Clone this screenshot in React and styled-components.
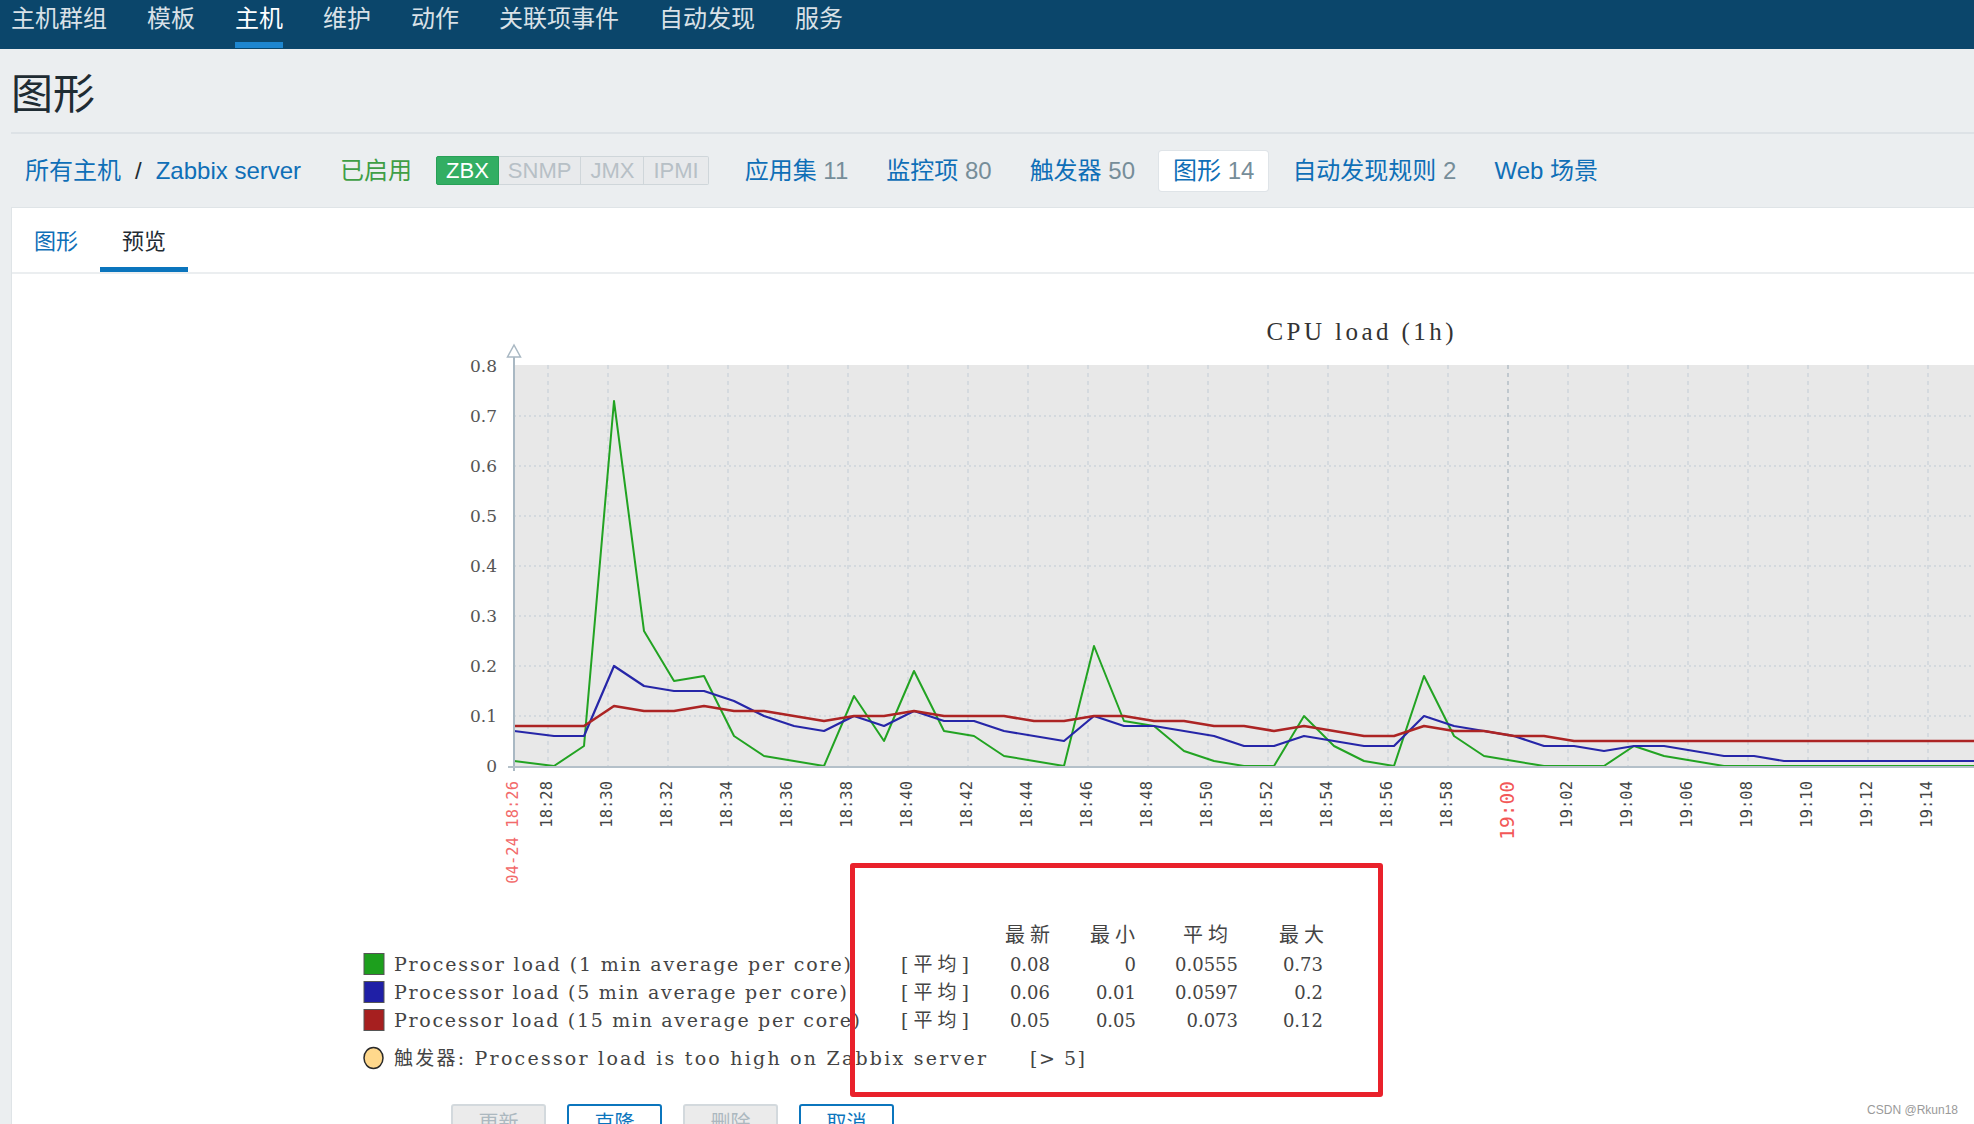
import React from "react";
import styled, { createGlobalStyle } from "styled-components";

const GlobalStyle = createGlobalStyle`
  html, body {
    margin: 0;
    padding: 0;
    background: #ebeef0;
    overflow-x: hidden;
  }
  body {
    font-family: "Liberation Sans", "Noto Sans CJK SC", sans-serif;
    color: #1f2c33;
  }
`;

//Styles
const Page = styled.div`
  position: relative;
  width: 100%;
  min-height: 1124px;
`;

const TopBar = styled.nav`
  height: 49px;
  background: #0b466b;
  display: flex;
  gap: 40px;
  padding-left: 11px;
  box-sizing: border-box;
`;

const TopItem = styled.a`
  height: 48px;
  box-sizing: border-box;
  padding-top: 4px;
  line-height: 30px;
  font-size: 24px;
  color: ${({ $active }) => ($active ? "#ffffff" : "#d9e1e7")};
  border-bottom: 6px solid ${({ $active }) => ($active ? "#1d86d0" : "transparent")};
  cursor: pointer;
`;

const TitleBlock = styled.div`
  margin-left: 11px;
  padding: 21px 0 12px 0;
  border-bottom: 2px solid #dde2e6;
`;

const Title = styled.h1`
  margin: 0;
  font-size: 42px;
  line-height: 50px;
  font-weight: normal;
  color: #1f2c33;
`;

const HostNav = styled.div`
  height: 73px;
  display: flex;
  align-items: center;
  padding-left: 11px;
  font-size: 24px;
  line-height: 30px;
`;

const Crumbs = styled.div`
  display: flex;
  align-items: center;
  padding-left: 14px;
`;

const Link = styled.a`
  color: #0f6fb7;
  cursor: pointer;
`;

const Slash = styled.span`
  margin: 0 14px;
  color: #1f2c33;
`;

const Status = styled.span`
  margin-left: 39px;
  color: #3f9e46;
`;

const Badges = styled.div`
  display: flex;
  margin-left: 24px;
`;

const Badge = styled.span`
  font-size: 22px;
  line-height: 27px;
  padding: 0 9px;
  border: 1px solid ${({ $on }) => ($on ? "#28a057" : "#cfd6da")};
  border-left-width: ${({ $first }) => ($first ? "1px" : "0")};
  background: ${({ $on }) => ($on ? "#33ae63" : "#e8eaec")};
  color: ${({ $on }) => ($on ? "#ffffff" : "#b7c0c6")};
  border-radius: ${({ $first, $last }) =>
    $first ? "2px 0 0 2px" : $last ? "0 2px 2px 0" : "0"};
`;

const HostTabs = styled.div`
  display: flex;
  gap: 10px;
  margin-left: 22px;
`;

const HostTab = styled.a`
  padding: 5px 14px;
  border-radius: 3px;
  background: ${({ $selected }) => ($selected ? "#ffffff" : "transparent")};
  box-shadow: ${({ $selected }) => ($selected ? "0 0 0 1px #dfe4e8" : "none")};
  color: #0f6fb7;
  cursor: pointer;
`;

const Count = styled.span`
  color: #768d99;
`;

const Panel = styled.div`
  margin-left: 11px;
  background: #ffffff;
  border-top: 1px solid #dfe4e7;
  border-left: 1px solid #dfe4e7;
`;

const TabBar = styled.div`
  display: flex;
  border-bottom: 2px solid #ebeef0;
`;

const Tab = styled.a`
  height: 64px;
  box-sizing: border-box;
  padding: 3px 22px 0;
  display: flex;
  align-items: center;
  font-size: 22px;
  color: ${({ $active }) => ($active ? "#1f2c33" : "#0f6fb7")};
  border-bottom: 5px solid ${({ $active }) => ($active ? "#0b75bd" : "transparent")};
  cursor: pointer;
`;

const GraphWrap = styled.div`
  display: block;
`;

const ButtonRow = styled.div`
  display: flex;
  gap: 21px;
  padding-left: 439px;
  padding-bottom: 20px;
`;

const Button = styled.button`
  width: 95px;
  height: 34px;
  border-radius: 3px;
  font-family: inherit;
  font-size: 20px;
  border: ${({ $disabled }) => ($disabled ? "2px solid #d3d9dd" : "2px solid #0b75bd")};
  background: ${({ $disabled }) => ($disabled ? "#ebebeb" : "#ffffff")};
  color: ${({ $disabled }) => ($disabled ? "#acb8bf" : "#0b75bd")};
`;

const Annotation = styled.div`
  position: absolute;
  left: 850px;
  top: 863px;
  width: 533px;
  height: 234px;
  box-sizing: border-box;
  border: 5px solid #e9212b;
  border-radius: 3px;
  pointer-events: none;
`;

const Watermark = styled.div`
  position: absolute;
  right: 16px;
  top: 1103px;
  font-size: 12px;
  color: #9a9a9a;
`;

// graph data
const PLOT_L = 514;
const PLOT_R = 1974;
const Y_ZERO = 766;
const Y_TOP = 365;
const yv = (v) => Y_ZERO - v * 500;
const xk = (k) => 554 + 30 * k;
const N = 50;
const pad = (arr, v) => [...arr, ...Array(Math.max(0, N - arr.length)).fill(v)];

const green = pad(
  [0, 0.04, 0.73, 0.27, 0.17, 0.18, 0.06, 0.02, 0.01, 0, 0.14, 0.05, 0.19, 0.07, 0.06, 0.02,
    0.01, 0, 0.24, 0.09, 0.08, 0.03, 0.01, 0, 0, 0.1, 0.04, 0.01, 0, 0.18, 0.06, 0.02, 0.01, 0,
    0, 0, 0.04, 0.02, 0.01, 0],
  0
);
const blue = pad(
  [0.06, 0.06, 0.2, 0.16, 0.15, 0.15, 0.13, 0.1, 0.08, 0.07, 0.1, 0.08, 0.11, 0.09, 0.09,
    0.07, 0.06, 0.05, 0.1, 0.08, 0.08, 0.07, 0.06, 0.04, 0.04, 0.06, 0.05, 0.04, 0.04, 0.1,
    0.08, 0.07, 0.06, 0.04, 0.04, 0.03, 0.04, 0.04, 0.03, 0.02, 0.02, 0.01],
  0.01
);
const red = pad(
  [0.08, 0.08, 0.12, 0.11, 0.11, 0.12, 0.11, 0.11, 0.1, 0.09, 0.1, 0.1, 0.11, 0.1, 0.1, 0.1,
    0.09, 0.09, 0.1, 0.1, 0.09, 0.09, 0.08, 0.08, 0.07, 0.08, 0.07, 0.06, 0.06, 0.08, 0.07,
    0.07, 0.06, 0.06, 0.05],
  0.05
);

const toPath = (start, arr) =>
  `M${PLOT_L},${yv(start)} ` + arr.map((v, k) => `L${xk(k)},${yv(v).toFixed(1)}`).join(" ");

const timeLabel = (j) => {
  const m = 28 + 2 * j;
  const h = 18 + Math.floor(m / 60);
  return `${h}:${String(m % 60).padStart(2, "0")}`;
};

const legendRows = [
  { color: "#1d9f1d", name: "Processor load (1 min average per core)", len: 457, vals: ["0.08", "0", "0.0555", "0.73"] },
  { color: "#1f1fa6", name: "Processor load (5 min average per core)", len: 453, vals: ["0.06", "0.01", "0.0597", "0.2"] },
  { color: "#a61f1f", name: "Processor load (15 min average per core)", len: 466, vals: ["0.05", "0.05", "0.073", "0.12"] },
];
const valueRight = [1050, 1136, 1238, 1323];
const headers = [
  { t: "最新", x: 1005 },
  { t: "最小", x: 1090 },
  { t: "平均", x: 1183 },
  { t: "最大", x: 1279 },
];

const SERIF = '"DejaVu Serif", "Noto Sans CJK SC", serif';
const MONO = '"DejaVu Sans Mono", monospace';
const CJK = '"Noto Sans CJK SC", sans-serif';

const Graph = () => (
  <svg width="1962" height="830" viewBox="12 274 1962 830" style={{ display: "block" }}>
    <defs>
      <clipPath id="plot">
        <rect x={PLOT_L} y={Y_TOP - 10} width={PLOT_R - PLOT_L} height={Y_ZERO - Y_TOP + 12} />
      </clipPath>
    </defs>
    <text x="1360" y="340" textAnchor="middle" textLength="187" lengthAdjust="spacing"
      fontFamily='"Liberation Serif", serif' fontSize="25" fill="#333">
      CPU load (1h)
    </text>

    <rect x={PLOT_L} y={Y_TOP} width={PLOT_R - PLOT_L} height={Y_ZERO - Y_TOP} fill="#e8e8e8" />

    {[1, 2, 3, 4, 5, 6, 7].map((i) => (
      <line key={"h" + i} x1={PLOT_L} x2={PLOT_R} y1={yv(i / 10)} y2={yv(i / 10)}
        stroke="#bfcad4" strokeWidth="1" strokeDasharray="2 3" />
    ))}
    {Array.from({ length: 24 }, (_, j) => (
      <line key={"v" + j} x1={548 + 60 * j} x2={548 + 60 * j} y1={Y_TOP} y2={Y_ZERO}
        stroke={j === 16 ? "#98a8b5" : "#c2ccd6"} strokeWidth="1" strokeDasharray="4 4" />
    ))}

    <g clipPath="url(#plot)" fill="none" strokeLinejoin="round">
      <path d={toPath(0.01, green)} stroke="#22a322" strokeWidth="2" />
      <path d={toPath(0.07, blue)} stroke="#2626a8" strokeWidth="2.2" />
      <path d={toPath(0.08, red)} stroke="#ac2424" strokeWidth="2.6" />
    </g>

    <line x1="514" x2="514" y1="356" y2="771" stroke="#a9b8c3" strokeWidth="2" />
    <line x1="508" x2={PLOT_R} y1="767" y2="767" stroke="#b4c0c9" strokeWidth="2" />
    <polygon points="507.5,357 520.5,357 514,345" fill="#fff" stroke="#a9b8c3" strokeWidth="1.5" />

    {Array.from({ length: 9 }, (_, i) => (
      <text key={"y" + i} x="497" y={yv(i / 10) + 6} textAnchor="end"
        fontFamily={SERIF} fontSize="17" fill="#555">
        {i === 0 ? "0" : `0.${i}`}
      </text>
    ))}

    {Array.from({ length: 24 }, (_, j) =>
      j === 16 ? (
        <text key={"x" + j} transform={`translate(${1508 + 6},781) rotate(-90)`} textAnchor="end"
          fontFamily={MONO} fontSize="19.5" fill="#f25757">
          19:00
        </text>
      ) : (
        <text key={"x" + j} transform={`translate(${548 + 60 * j + 4},781) rotate(-90)`} textAnchor="end"
          fontFamily={MONO} fontSize="15.5" fill="#454545">
          {timeLabel(j)}
        </text>
      )
    )}
    <text transform="translate(518,781) rotate(-90)" textAnchor="end"
      fontFamily={MONO} fontSize="15.5" fill="#f26a6a">
      04-24 18:26
    </text>

    {headers.map((h) => (
      <text key={h.t} x={h.x} y="942" fontFamily={CJK} fontSize="20" fill="#444"
        textLength="45" lengthAdjust="spacing">
        {h.t}
      </text>
    ))}

    {legendRows.map((r, i) => {
      const cy = 964 + 28 * i;
      return (
        <g key={r.name}>
          <rect x="364" y={cy - 10.5} width="20" height="21" fill={r.color} stroke="#555" strokeWidth="1" />
          <text x="394" y={cy + 7} fontFamily={SERIF} fontSize="19" fill="#444"
            textLength={r.len} lengthAdjust="spacing">
            {r.name}
          </text>
          <text x="901" y={cy + 7} fontFamily={SERIF} fontSize="19" fill="#444"
            textLength="68" lengthAdjust="spacing">
            [平均]
          </text>
          {r.vals.map((v, c) => (
            <text key={c} x={valueRight[c]} y={cy + 7} textAnchor="end"
              fontFamily={SERIF} fontSize="18" fill="#444">
              {v}
            </text>
          ))}
        </g>
      );
    })}

    <ellipse cx="373.5" cy="1058" rx="9.5" ry="10.5" fill="#ffd88c" stroke="#2a2a2a" strokeWidth="1.5" />
    <text x="394" y="1065" fontFamily={SERIF} fontSize="19" fill="#444"
      textLength="592" lengthAdjust="spacing">
      触发器: Processor load is too high on Zabbix server
    </text>
    <text x="1030" y="1065" fontFamily={SERIF} fontSize="19" fill="#444"
      textLength="55" lengthAdjust="spacing">
      [&gt; 5]
    </text>
  </svg>
);

const topItems = ["主机群组", "模板", "主机", "维护", "动作", "关联项事件", "自动发现", "服务"];

const hostTabs = [
  { label: "应用集", count: "11" },
  { label: "监控项", count: "80" },
  { label: "触发器", count: "50" },
  { label: "图形", count: "14", selected: true },
  { label: "自动发现规则", count: "2" },
  { label: "Web 场景" },
];

const App = () => {
  return (
    <Page>
      <GlobalStyle />
      <TopBar>
        {topItems.map((t) => (
          <TopItem key={t} $active={t === "主机"}>
            {t}
          </TopItem>
        ))}
      </TopBar>

      <TitleBlock>
        <Title>图形</Title>
      </TitleBlock>

      <HostNav>
        <Crumbs>
          <Link>所有主机</Link>
          <Slash>/</Slash>
          <Link>Zabbix server</Link>
        </Crumbs>
        <Status>已启用</Status>
        <Badges>
          <Badge $on $first>ZBX</Badge>
          <Badge>SNMP</Badge>
          <Badge>JMX</Badge>
          <Badge $last>IPMI</Badge>
        </Badges>
        <HostTabs>
          {hostTabs.map((t) => (
            <HostTab key={t.label} $selected={t.selected}>
              {t.label}
              {t.count && <Count> {t.count}</Count>}
            </HostTab>
          ))}
        </HostTabs>
      </HostNav>

      <Panel>
        <TabBar>
          <Tab>图形</Tab>
          <Tab $active>预览</Tab>
        </TabBar>
        <GraphWrap>
          <Graph />
        </GraphWrap>
        <ButtonRow>
          <Button $disabled>更新</Button>
          <Button>克隆</Button>
          <Button $disabled>删除</Button>
          <Button>取消</Button>
        </ButtonRow>
      </Panel>

      <Annotation />
      <Watermark>CSDN @Rkun18</Watermark>
    </Page>
  );
};

export default App;
